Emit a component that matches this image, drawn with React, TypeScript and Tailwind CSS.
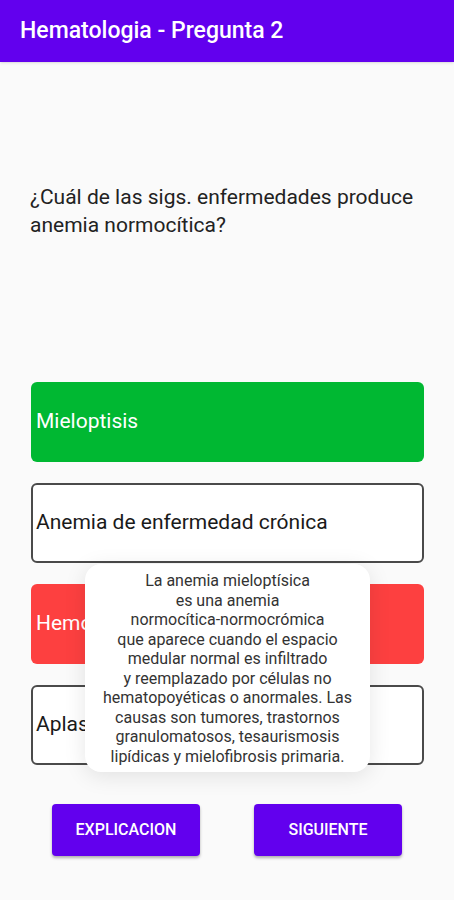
const options = [
  { label: "Mieloptisis", tone: "green" },
  { label: "Anemia de enfermedad crónica", tone: "plain" },
  { label: "Hemorragia aguda", tone: "red" },
  { label: "Aplasia medular", tone: "plain" },
];

const explanation = [
  "La anemia mieloptísica",
  "es una anemia",
  "normocítica-normocrómica",
  "que aparece cuando el espacio",
  "medular normal es infiltrado",
  "y reemplazado por células no",
  "hematopoyéticas o anormales. Las",
  "causas son tumores, trastornos",
  "granulomatosos, tesaurismosis",
  "lipídicas y mielofibrosis primaria.",
];

function OptionCard({ label, tone }: { label: string; tone: string }) {
  const base = "flex h-[80px] items-center rounded-[6px] text-[21px]";
  if (tone === "green") {
    return <div className={`${base} bg-[#00b832] px-[5px] text-white`}>{label}</div>;
  }
  if (tone === "red") {
    return <div className={`${base} bg-[#fd4040] px-[5px] text-white`}>{label}</div>;
  }
  return (
    <div className={`${base} border-2 border-[#4a4a4a] bg-white px-[3px] text-[#1a1a1a]`}>
      {label}
    </div>
  );
}

export default function App() {
  return (
    <div className="relative flex h-[900px] w-[454px] flex-col overflow-hidden bg-[#fafafa] font-['Roboto',sans-serif]">
      <header className="flex h-[62px] items-center bg-[#6200ee] px-5 shadow-sm">
        <h1 className="text-[23px] font-medium text-white">Hematologia - Pregunta 2</h1>
      </header>

      <p className="mt-[121px] px-[30px] text-[21px] leading-[28px] text-[#222]">
        ¿Cuál de las sigs. enfermedades produce anemia normocítica?
      </p>

      <div className="mt-[143px] flex flex-col gap-[21px] pl-[31px] pr-[30px]">
        {options.map((o) => (
          <OptionCard key={o.label} label={o.label} tone={o.tone} />
        ))}
      </div>

      <div className="mt-[39px] flex justify-center gap-[54px]">
        <button className="h-[52px] w-[148px] rounded-[4px] bg-[#6200ee] text-[16px] font-medium text-white shadow-[0_2px_3px_rgba(0,0,0,0.3)]">
          EXPLICACION
        </button>
        <button className="h-[52px] w-[148px] rounded-[4px] bg-[#6200ee] text-[16px] font-medium text-white shadow-[0_2px_3px_rgba(0,0,0,0.3)]">
          SIGUIENTE
        </button>
      </div>

      <div className="absolute left-[85px] top-[564px] w-[285px] rounded-[16px] bg-white px-1 pb-[6px] pt-[7px] text-center text-[16px] leading-[19.5px] whitespace-nowrap text-[#333] shadow-[0_4px_22px_rgba(0,0,0,0.1)]">
        {explanation.map((line) => (
          <div key={line}>{line}</div>
        ))}
      </div>
    </div>
  );
}
